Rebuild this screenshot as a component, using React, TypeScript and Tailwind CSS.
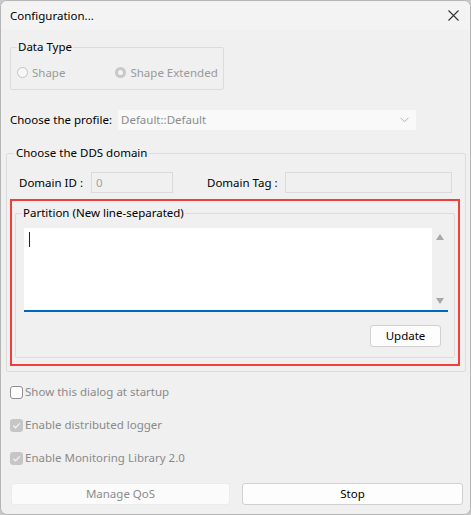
import React from 'react';

const font = { fontFamily: '"Noto Sans", "Open Sans", sans-serif' };

const CheckRow = ({ label, checked, className }: { label: string; checked?: boolean; className?: string }) => (
  <div className={`flex items-center h-[16px] ${className ?? ''}`}>
    {checked ? (
      <span className="w-[13px] h-[13px] rounded-[3px] bg-[#c6c6c6] flex items-center justify-center">
        <svg width="9" height="9" viewBox="0 0 10 10">
          <path d="M1.5 5.2 L4 7.6 L8.6 2.6" fill="none" stroke="#f3f3f3" strokeWidth="1.5" />
        </svg>
      </span>
    ) : (
      <span className="w-[13px] h-[13px] rounded-[3px] border border-[#8f8f8f] bg-white" />
    )}
    <span className="ml-[2px] text-[11.5px] text-[#8a8a8a] whitespace-nowrap">{label}</span>
  </div>
);

const Radio = ({ label, checked }: { label: string; checked?: boolean }) => (
  <div className="flex items-center whitespace-nowrap">
    {checked ? (
      <span className="w-[11px] h-[11px] rounded-full bg-[#c8c8c8] flex items-center justify-center">
        <span className="w-[5px] h-[5px] rounded-full bg-[#f3f3f3]" />
      </span>
    ) : (
      <span className="w-[11px] h-[11px] rounded-full border border-[#c3c3c3] bg-[#f7f7f7]" />
    )}
    <span className="ml-[4px] text-[11.5px] text-[#9a9a9a]">{label}</span>
  </div>
);

export default function App() {
  return (
    <div className="w-[471px] h-[515px] bg-[#c9c9c9] overflow-hidden" style={font}>
      <div className="w-[471px] h-[515px] rounded-[7px] border border-[#b5b5b5] bg-[#f0f0f0] overflow-hidden flex flex-col text-[#1a1a1a]">
        {/* title bar */}
        <div className="h-[29px] shrink-0 bg-[#f3f3f3] flex items-center justify-between pl-[9px] pr-[9px]">
          <span className="text-[11.5px] text-black">Configuration...</span>
          <svg width="11" height="11" viewBox="0 0 11 11" className="mr-[2px]">
            <path d="M0.5 0.5 L10.5 10.5 M10.5 0.5 L0.5 10.5" stroke="#333" strokeWidth="1.1" />
          </svg>
        </div>

        <div className="flex flex-col px-[4px]">
          {/* data type */}
          <fieldset className="ml-[5px] mt-[9px] w-[214px] min-w-0 h-[51px] border border-[#dcdcdc] rounded-[2px] pl-[6px] overflow-hidden">
            <legend className="text-[11.5px] leading-[16px] px-[1px] text-black">Data Type</legend>
            <div className="flex items-center mt-[9px] gap-[50px]">
              <Radio label="Shape" />
              <Radio label="Shape Extended" checked />
            </div>
          </fieldset>

          {/* profile */}
          <div className="flex items-center mt-[19px] ml-[5px] h-[22px]">
            <span className="text-[11.5px] text-black w-[107px] whitespace-nowrap">Choose the profile:</span>
            <div className="w-[300px] h-[22px] bg-[#f9f9f9] border border-[#f0f0f0] flex items-center justify-between pl-[3px] pr-[7px]">
              <span className="text-[11.5px] text-[#8c8c8c]">Default::Default</span>
              <svg width="9" height="6" viewBox="0 0 9 6">
                <path d="M0.5 0.8 L4.5 4.8 L8.5 0.8" fill="none" stroke="#b0b0b0" strokeWidth="1" />
              </svg>
            </div>
          </div>

          {/* DDS domain */}
          <fieldset className="ml-[1px] mt-[14px] w-[460px] min-w-0 h-[227px] border border-[#dcdcdc] rounded-[2px] px-[3px]">
            <legend className="text-[11.5px] leading-[16px] px-[2px] ml-[4px] text-black">Choose the DDS domain</legend>
            <div className="flex items-center mt-[11px] h-[21px]">
              <span className="ml-[9px] w-[72px] text-[11.5px] text-black whitespace-nowrap">Domain ID :</span>
              <div className="w-[82px] h-[21px] border border-[#dadada] bg-[#f0f0f0] flex items-center pl-[4px] text-[11.5px] text-[#a3a3a3]">0</div>
              <span className="ml-[34px] w-[78px] text-[11.5px] text-black whitespace-nowrap">Domain Tag :</span>
              <div className="w-[167px] h-[21px] border border-[#dadada] bg-[#f0f0f0]" />
            </div>

            {/* highlighted partition */}
            <div className="mt-[6px] w-[450px] h-[167px] border-2 border-[#f23d3d] px-[3px] pt-[4px]">
              <fieldset className="w-[440px] min-w-0 h-[153px] border border-[#dcdcdc] rounded-[2px] px-[8px]">
                <legend className="text-[11.5px] leading-[16px] px-[1px] ml-[-2px] text-black">Partition (New line-separated)</legend>
                <div className="mt-[7px] w-[424px] h-[84px] bg-white border-b-2 border-[#0067c0] flex">
                  <div className="flex-1 pl-[5px] pt-[4px]">
                    <div className="w-[1px] h-[15px] bg-[#222]" />
                  </div>
                  <div className="w-[16px] h-[82px] bg-[#f0f0f0] flex flex-col items-center justify-between py-[6px]">
                    <svg width="8" height="6" viewBox="0 0 8 6"><path d="M0 6 L4 0 L8 6 Z" fill="#a8a8a8" /></svg>
                    <svg width="8" height="6" viewBox="0 0 8 6"><path d="M0 0 L4 6 L8 0 Z" fill="#a8a8a8" /></svg>
                  </div>
                </div>
                <div className="flex justify-end mt-[13px] pr-[5px]">
                  <button className="w-[71px] h-[22px] bg-[#fdfdfd] border border-[#d0d0d0] rounded-[3px] text-[11.5px] text-black">Update</button>
                </div>
              </fieldset>
            </div>
          </fieldset>

          {/* checkboxes */}
          <CheckRow className="mt-[12px] ml-[5px]" label="Show this dialog at startup" />
          <CheckRow className="mt-[17px] ml-[5px]" label="Enable distributed logger" checked />
          <CheckRow className="mt-[17px] ml-[5px]" label="Enable Monitoring Library 2.0" checked />

          {/* buttons */}
          <div className="flex mt-[17px] ml-[6px] gap-[12px]">
            <button className="w-[219px] h-[22px] bg-[#fbfbfb] border border-[#ececec] rounded-[3px] text-[11.5px] text-[#8c8c8c]">Manage QoS</button>
            <button className="w-[221px] h-[22px] bg-[#fdfdfd] border border-[#d0d0d0] rounded-[3px] text-[11.5px] text-black">Stop</button>
          </div>
        </div>
      </div>
    </div>
  );
}
